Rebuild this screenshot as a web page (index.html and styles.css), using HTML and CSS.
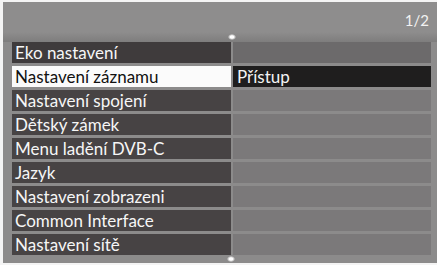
FILE: index.html
```html
<!DOCTYPE html>
<html>
<head>
<meta charset="utf-8">
<link rel="stylesheet" href="styles.css">
</head>
<body>
<div class="frame">
  <div class="header"><span class="page">1/2</span></div>
  <div class="list">
    <div class="row first"><div class="cell left">Eko nastavení</div><div class="cell right"></div></div>
    <div class="row active"><div class="cell left">Nastavení záznamu</div><div class="cell right">Přístup</div></div>
    <div class="row"><div class="cell left">Nastavení spojení</div><div class="cell right"></div></div>
    <div class="row"><div class="cell left">Dětský zámek</div><div class="cell right"></div></div>
    <div class="row"><div class="cell left">Menu ladění DVB-C</div><div class="cell right"></div></div>
    <div class="row"><div class="cell left">Jazyk</div><div class="cell right"></div></div>
    <div class="row"><div class="cell left">Nastavení zobrazeni</div><div class="cell right"></div></div>
    <div class="row"><div class="cell left">Common Interface</div><div class="cell right"></div></div>
    <div class="row"><div class="cell left">Nastavení sítě</div><div class="cell right"></div></div>
  </div>
  <span class="dot dot-up"></span>
  <span class="dot dot-down"></span>
</div>
</body>
</html>
```
FILE: styles.css
```css
html, body {
  margin: 0;
  padding: 0;
  background: #f4f4f4;
  width: 437px;
  height: 265px;
  overflow: hidden;
}
.frame {
  position: relative;
  margin: 2px 0 0 3px;
  width: 434px;
  height: 261px;
  background: #8c8b8b;
  box-sizing: border-box;
  padding: 0 6px 0 9px;
  font-family: Lato, "Open Sans", sans-serif;
}
.header {
  height: 40px;
  display: flex;
  justify-content: flex-end;
  align-items: flex-start;
  background: linear-gradient(#8e8d8d 0, #8e8d8d 30px, #7e7d7d 40px);
  margin: 0 -6px 0 -9px;
  padding: 0 8px 0 0;
}
.page {
  color: #f2f2f2;
  font-size: 15px;
  margin-top: 9px;
}
.list {
  display: flex;
  flex-direction: column;
  gap: 3px;
}
.row {
  display: grid;
  grid-template-columns: 219px 198px;
  column-gap: 2px;
  height: 21px;
}
.cell {
  color: #f6f6f6;
  font-size: 17px;
  line-height: 21px;
  white-space: nowrap;
  overflow: hidden;
}
.left {
  background: #474344;
  padding-left: 3px;
}
.right {
  background: #7b797a;
  padding-left: 4px;
}
.first .left { background: #3f3b3c; }
.first .right { background: #6c6a6b; }
.active .left { background: #fbfbfb; color: #111; }
.active .right { background: #1f1e1e; color: #f4f4f4; }
.dot {
  position: absolute;
  width: 8px;
  height: 6px;
  border-radius: 50%;
  background: radial-gradient(#ffffff 30%, rgba(255,255,255,0) 75%);
}
.dot-up { left: 225px; top: 32px; }
.dot-down { left: 224px; top: 254px; }
```
